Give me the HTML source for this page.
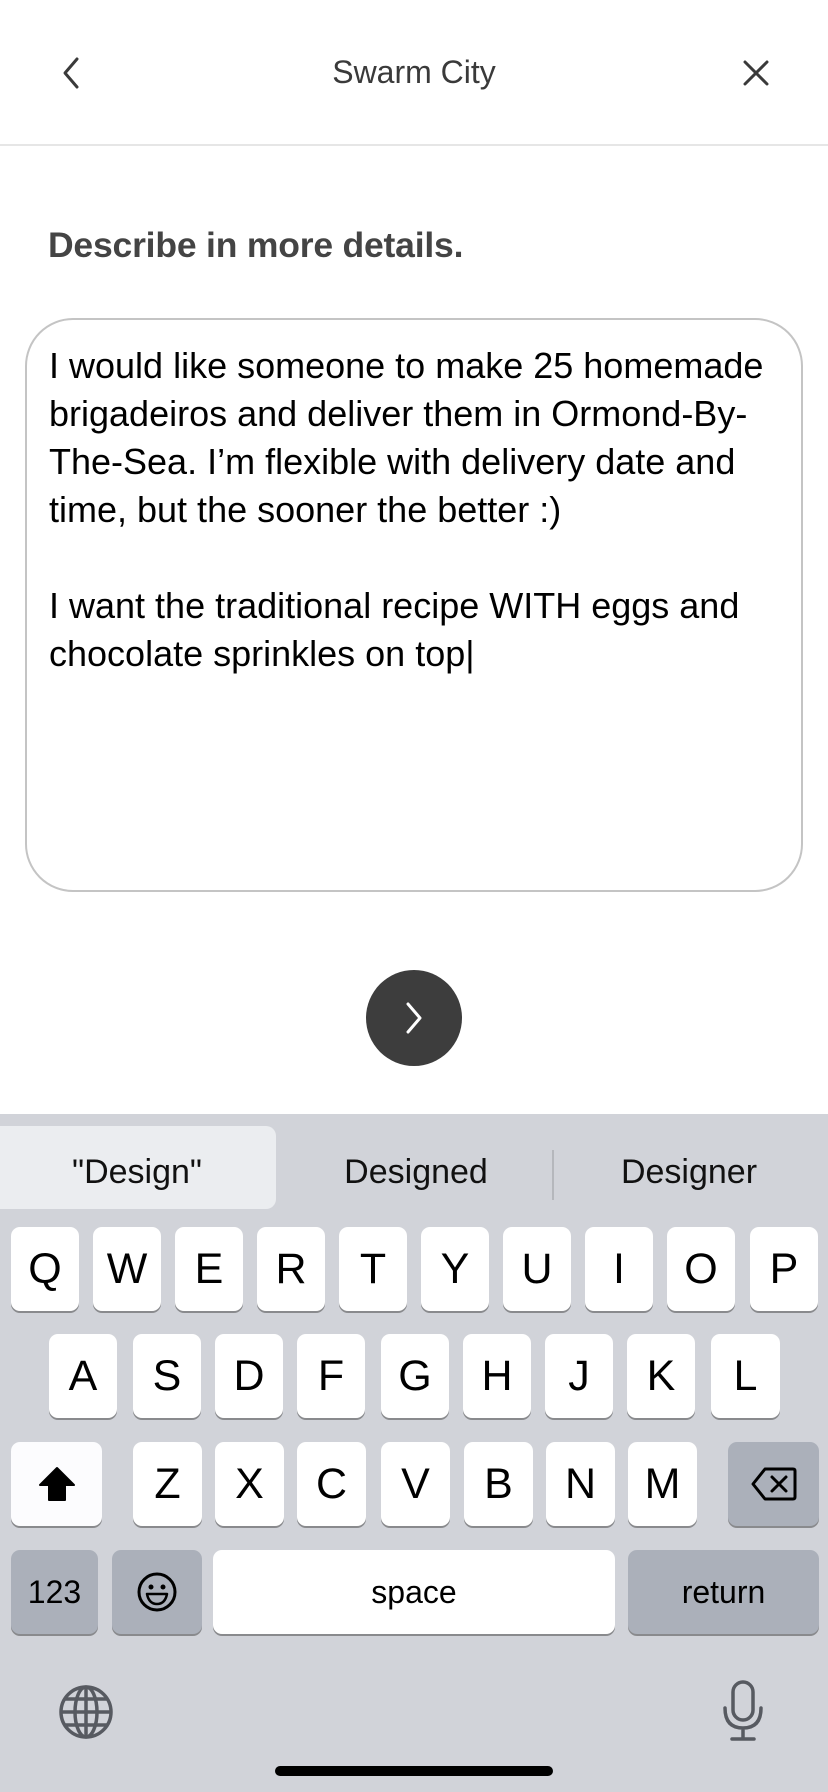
<!DOCTYPE html>
<html><head><meta charset="utf-8"><style>
*{margin:0;padding:0;box-sizing:border-box}
body{width:828px;height:1792px;overflow:hidden;background:#fff;font-family:"Liberation Sans",sans-serif;position:relative}
.abs{position:absolute}
.title{left:0;width:828px;top:54px;text-align:center;font-size:32px;color:#3a3a3a}
.div{left:0;top:144px;width:828px;height:2px;background:#e6e6e6}
.h{left:48px;top:225px;font-size:35.5px;font-weight:bold;color:#444;letter-spacing:-0.2px}
.box{left:25px;top:318px;width:778px;height:574px;border:2px solid #c4c4c4;border-radius:48px}
.txt{left:49px;top:342px;font-size:36px;line-height:48px;color:#000;white-space:pre}
.btn{left:366px;top:970px;width:96px;height:96px;border-radius:50%;background:#3d3d3d}
.kb{left:0;top:1114px;width:828px;height:678px;background:#d1d3d9}
.hl{left:0;top:1126px;width:276px;height:83px;background:#ebedf0;border-radius:0 10px 10px 0}
.sg{top:1153px;font-size:34px;color:#111;transform:translateX(-50%)}
.sep{left:552px;top:1150px;width:2px;height:50px;background:#b5b7bc}
.k{position:absolute;height:84px;background:#fff;border-radius:9px;box-shadow:0 2px 0 #898a8d;font-size:43px;color:#000;display:flex;align-items:center;justify-content:center}
.d{background:#abb0ba}
.s{font-size:32px}
</style></head><body>
<svg class="abs" style="left:60px;top:56px" width="24" height="34" viewBox="0 0 24 34"><path d="M17 3 L5 17 L17 31" fill="none" stroke="#3a3a3a" stroke-width="3" stroke-linecap="round" stroke-linejoin="round"/></svg>
<div class="abs title">Swarm City</div>
<svg class="abs" style="left:742px;top:60px" width="28" height="26" viewBox="0 0 28 26"><path d="M3 2 L25 24 M25 2 L3 24" stroke="#3a3a3a" stroke-width="3" stroke-linecap="round"/></svg>
<div class="abs div"></div>
<div class="abs h">Describe in more details.</div>
<div class="abs box"></div>
<div class="abs txt">I would like someone to make 25 homemade
brigadeiros and deliver them in Ormond-By-
The-Sea. I’m flexible with delivery date and
time, but the sooner the better :)

I want the traditional recipe WITH eggs and
chocolate sprinkles on top|</div>
<div class="abs btn"><svg width="96" height="96" viewBox="0 0 96 96"><path d="M42 34 L54 48 L42 62" fill="none" stroke="#fff" stroke-width="3" stroke-linecap="round" stroke-linejoin="round"/></svg></div>
<div class="abs kb"></div>
<div class="abs hl"></div>
<div class="abs sg" style="left:137px">"Design"</div>
<div class="abs sg" style="left:416px">Designed</div>
<div class="abs sep"></div>
<div class="abs sg" style="left:689px">Designer</div>

<div class="k" style="left:11px;top:1227px;width:68px">Q</div>
<div class="k" style="left:93px;top:1227px;width:68px">W</div>
<div class="k" style="left:175px;top:1227px;width:68px">E</div>
<div class="k" style="left:257px;top:1227px;width:68px">R</div>
<div class="k" style="left:339px;top:1227px;width:68px">T</div>
<div class="k" style="left:421px;top:1227px;width:68px">Y</div>
<div class="k" style="left:503px;top:1227px;width:68px">U</div>
<div class="k" style="left:585px;top:1227px;width:68px">I</div>
<div class="k" style="left:667px;top:1227px;width:68px">O</div>
<div class="k" style="left:750px;top:1227px;width:68px">P</div>

<div class="k" style="left:49px;top:1334px;width:68px">A</div>
<div class="k" style="left:133px;top:1334px;width:68px">S</div>
<div class="k" style="left:215px;top:1334px;width:68px">D</div>
<div class="k" style="left:297px;top:1334px;width:68px">F</div>
<div class="k" style="left:381px;top:1334px;width:68px">G</div>
<div class="k" style="left:463px;top:1334px;width:68px">H</div>
<div class="k" style="left:545px;top:1334px;width:68px">J</div>
<div class="k" style="left:627px;top:1334px;width:68px">K</div>
<div class="k" style="left:711px;top:1334px;width:69px">L</div>

<div class="k" style="left:11px;top:1442px;width:91px;background:#fcfcfe"><svg width="40" height="38" viewBox="0 0 40 38"><path d="M20 3 L37 20 L28 20 L28 35 L12 35 L12 20 L3 20 Z" fill="#000" stroke="#000" stroke-width="2" stroke-linejoin="round"/></svg></div>
<div class="k" style="left:133px;top:1442px;width:69px">Z</div>
<div class="k" style="left:215px;top:1442px;width:69px">X</div>
<div class="k" style="left:297px;top:1442px;width:69px">C</div>
<div class="k" style="left:381px;top:1442px;width:69px">V</div>
<div class="k" style="left:464px;top:1442px;width:69px">B</div>
<div class="k" style="left:546px;top:1442px;width:69px">N</div>
<div class="k" style="left:628px;top:1442px;width:69px">M</div>
<div class="k d" style="left:728px;top:1442px;width:91px"><svg width="48" height="36" viewBox="0 0 48 36"><path d="M15 3 H43 Q45 3 45 5 V31 Q45 33 43 33 H15 L3 18 Z" fill="none" stroke="#000" stroke-width="3" stroke-linejoin="round"/><path d="M22 11 L36 25 M36 11 L22 25" stroke="#000" stroke-width="3" stroke-linecap="round"/></svg></div>

<div class="k d s" style="left:11px;top:1550px;width:87px">123</div>
<div class="k d" style="left:112px;top:1550px;width:90px"><svg width="42" height="42" viewBox="0 0 42 42"><circle cx="21" cy="21" r="18" fill="none" stroke="#000" stroke-width="3"/><circle cx="15" cy="16" r="2.5"/><circle cx="27" cy="16" r="2.5"/><path d="M11 23 H31 Q29 33 21 33 Q13 33 11 23 Z" fill="none" stroke="#000" stroke-width="2.5" stroke-linejoin="round"/></svg></div>
<div class="k s" style="left:213px;top:1550px;width:402px">space</div>
<div class="k d s" style="left:628px;top:1550px;width:191px">return</div>

<svg class="abs" style="left:58px;top:1684px" width="56" height="56" viewBox="0 0 56 56"><g fill="none" stroke="#575a61" stroke-width="3.5"><circle cx="28" cy="28" r="25"/><ellipse cx="28" cy="28" rx="11" ry="25"/><path d="M28 3 V53 M3 28 H53 M7 15 H49 M7 41 H49"/></g></svg>
<svg class="abs" style="left:721px;top:1680px" width="44" height="62" viewBox="0 0 44 62"><g fill="none" stroke="#575a61" stroke-width="3.5" stroke-linecap="round"><rect x="12" y="2" width="20" height="38" rx="10"/><path d="M4 28 Q4 48 22 48 Q40 48 40 28 M22 48 V59 M11 59 H33"/></g></svg>
<div class="abs" style="left:275px;top:1766px;width:278px;height:10px;border-radius:5px;background:#000"></div>
</body></html>
